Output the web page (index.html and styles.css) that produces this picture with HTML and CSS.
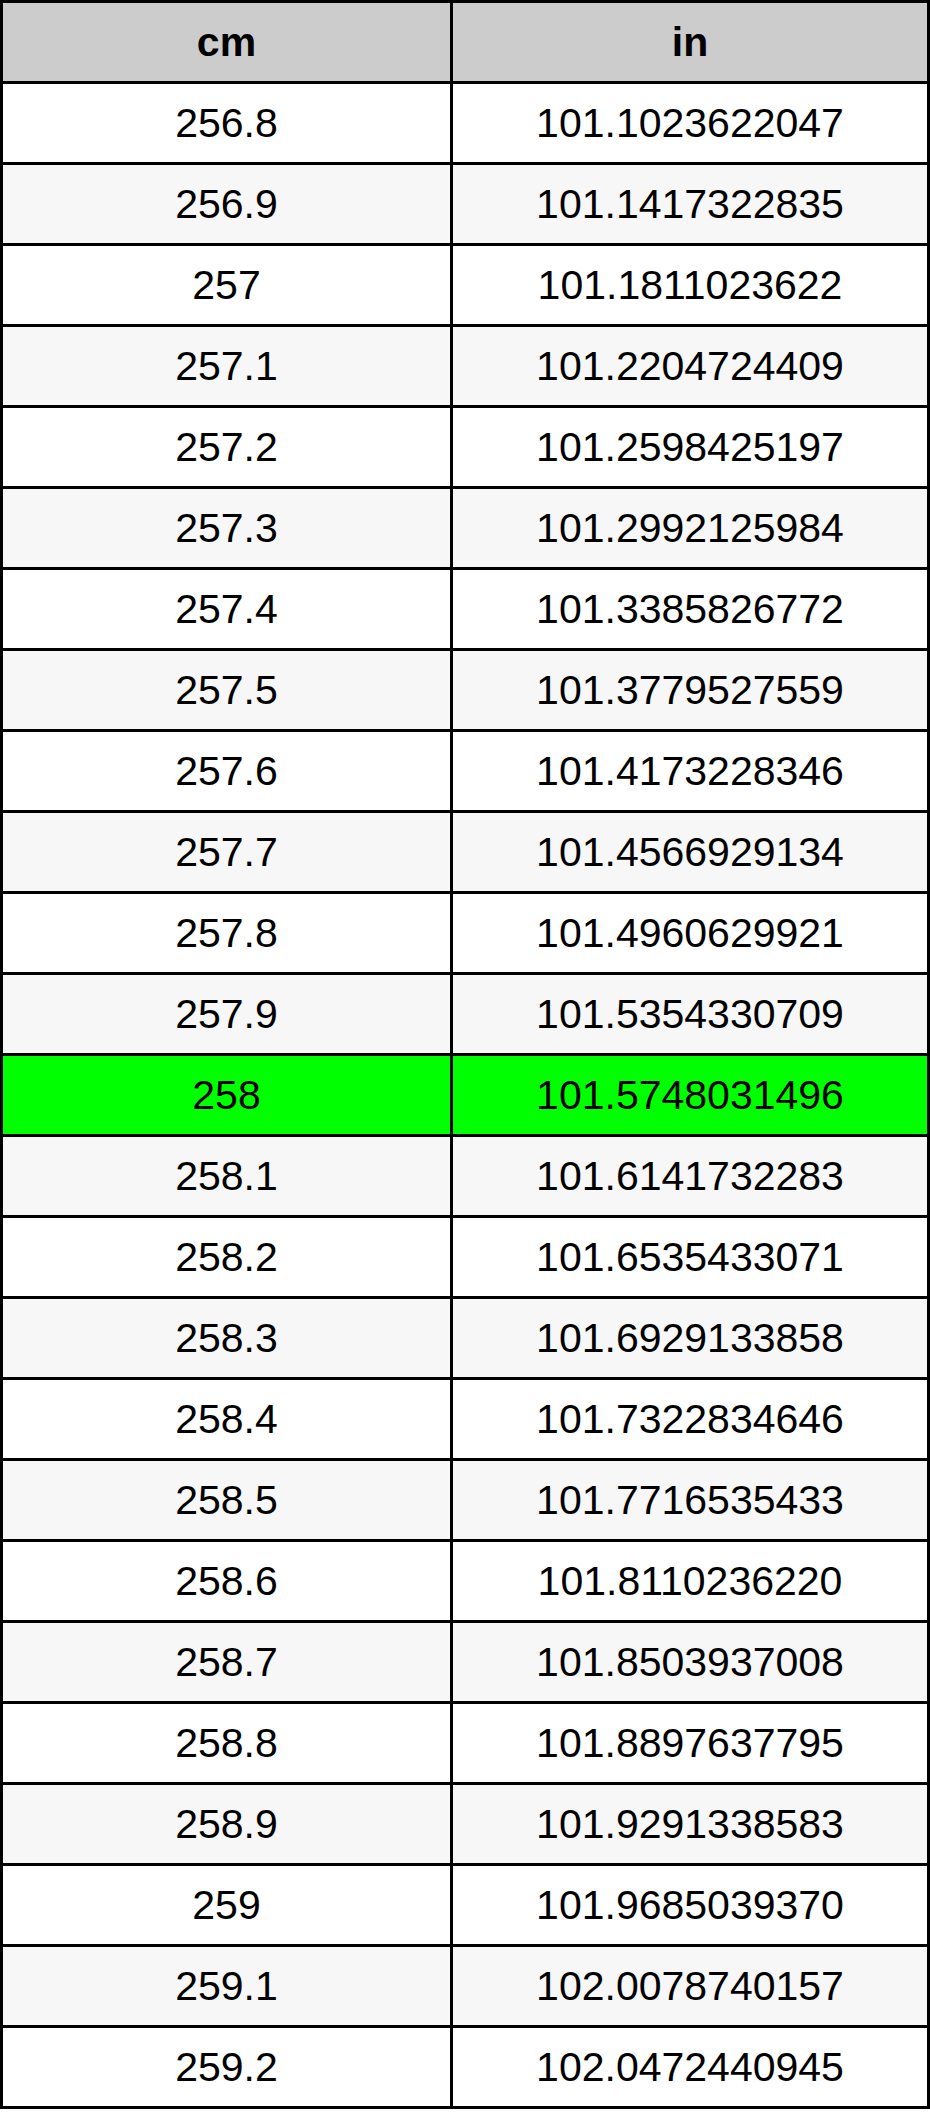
FILE: index.html
```html
<!DOCTYPE html>
<html>
<head>
<meta charset="utf-8">
<link rel="stylesheet" href="styles.css">
</head>
<body>
<table class="conv">
<colgroup><col class="c1"><col class="c2"></colgroup>
<thead>
<tr><th>cm</th><th>in</th></tr>
</thead>
<tbody>
<tr><td>256.8</td><td>101.1023622047</td></tr>
<tr class="alt"><td>256.9</td><td>101.1417322835</td></tr>
<tr><td>257</td><td>101.1811023622</td></tr>
<tr class="alt"><td>257.1</td><td>101.2204724409</td></tr>
<tr><td>257.2</td><td>101.2598425197</td></tr>
<tr class="alt"><td>257.3</td><td>101.2992125984</td></tr>
<tr><td>257.4</td><td>101.3385826772</td></tr>
<tr class="alt"><td>257.5</td><td>101.3779527559</td></tr>
<tr><td>257.6</td><td>101.4173228346</td></tr>
<tr class="alt"><td>257.7</td><td>101.4566929134</td></tr>
<tr><td>257.8</td><td>101.4960629921</td></tr>
<tr class="alt"><td>257.9</td><td>101.5354330709</td></tr>
<tr class="hl"><td>258</td><td>101.5748031496</td></tr>
<tr class="alt"><td>258.1</td><td>101.6141732283</td></tr>
<tr><td>258.2</td><td>101.6535433071</td></tr>
<tr class="alt"><td>258.3</td><td>101.6929133858</td></tr>
<tr><td>258.4</td><td>101.7322834646</td></tr>
<tr class="alt"><td>258.5</td><td>101.7716535433</td></tr>
<tr><td>258.6</td><td>101.8110236220</td></tr>
<tr class="alt"><td>258.7</td><td>101.8503937008</td></tr>
<tr><td>258.8</td><td>101.8897637795</td></tr>
<tr class="alt"><td>258.9</td><td>101.9291338583</td></tr>
<tr><td>259</td><td>101.9685039370</td></tr>
<tr class="alt"><td>259.1</td><td>102.0078740157</td></tr>
<tr><td>259.2</td><td>102.0472440945</td></tr>
</tbody>
</table>
</body>
</html>
```
FILE: styles.css
```css
html, body {
  margin: 0;
  padding: 0;
  background: #ffffff;
}
.conv {
  width: 930px;
  border-collapse: collapse;
  table-layout: fixed;
  font-family: "Liberation Sans", Arial, sans-serif;
  font-size: 41px;
  color: #000000;
}
.conv .c1 { width: 450px; }
.conv .c2 { width: 477px; }
.conv th,
.conv td {
  border: 3px solid #000000;
  height: 78px;
  padding: 0;
  text-align: center;
  vertical-align: middle;
  line-height: 1;
}
.conv th {
  background: #cccccc;
  font-weight: bold;
}
.conv td {
  background: #ffffff;
}
.conv tr.alt td {
  background: #f7f7f7;
}
.conv tr.hl td {
  background: #00ff00;
}
```
